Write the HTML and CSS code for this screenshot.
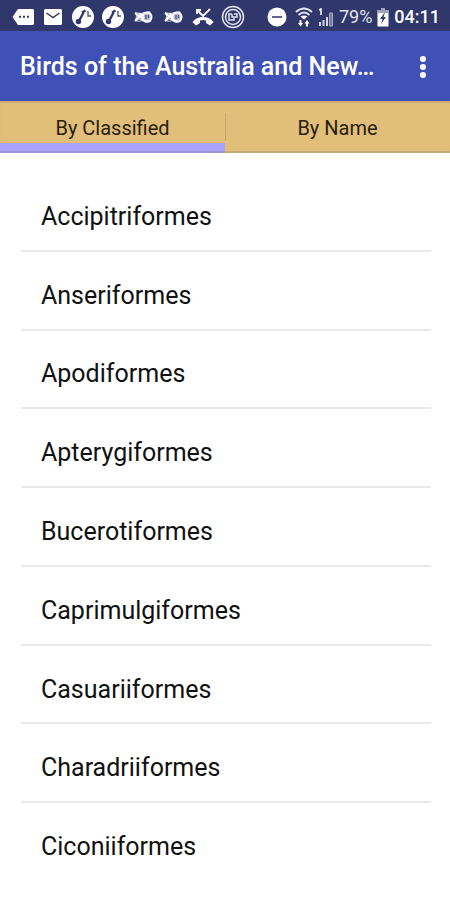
FILE: index.html
```html
<!DOCTYPE html>
<html lang="en">
<head>
<meta charset="utf-8">
<meta name="viewport" content="width=device-width, initial-scale=1">
<title>Birds of the Australia and New…</title>
<link rel="stylesheet" href="styles.css">
</head>
<body>
<svg class="defs" aria-hidden="true">
  <symbol id="pen" viewBox="0 0 24 24">
    <circle cx="12" cy="12" r="11" fill="#fff"/>
    <path d="M8 16l4.500-8.500" fill="none" stroke="#30386b" stroke-width="2.400"/>
    <path d="M11 7.500l3.500-2" stroke="#30386b" stroke-width="2.400"/>
    <circle cx="7.500" cy="16.500" r="2.700" fill="#30386b"/>
    <path d="M17 6v5h3" fill="none" stroke="#4a517d" stroke-width="1.300"/>
  </symbol>
  <symbol id="cast" viewBox="0 0 24 24">
    <path d="M4 7l6 1 3-1 6-1 2 5-1 6-5 1-4-2-3 1-4-1 1-5z" fill="#b4b8d0"/>
    <path d="M4 8l5 4M4 16l5-5M9 8l3 8" fill="none" stroke="#fff" stroke-width="2"/>
    <circle cx="16" cy="12" r="4.500" fill="none" stroke="#fff" stroke-width="2"/>
    <path d="M15 10v4M17.500 10v3M7 15l2 1" stroke="#4a517d" stroke-width="1.200"/>
  </symbol>
</svg>
<div class="status">
  <div class="notices">
    <svg viewBox="0 0 24 24"><path d="M1.500 12L7 4h14.500q1.500 0 1.500 1.500v13q0 1.500-1.500 1.500H7z" fill="#fff"/><path d="M8 10.800h2v2H8zM12 10.800h2v2h-2zM16 10.800h2v2h-2z" fill="#30386b"/></svg>
    <svg viewBox="0 0 24 24"><rect x="3" y="4" width="18" height="16" rx="1.500" fill="#fff"/><path d="M5.500 8l6.500 4.500L18.500 8" fill="none" stroke="#30386b" stroke-width="1.500"/></svg>
    <svg><use href="#pen"/></svg>
    <svg><use href="#pen"/></svg>
    <svg><use href="#cast"/></svg>
    <svg><use href="#cast"/></svg>
    <svg viewBox="0 0 24 24"><path d="M6 5l6 6 7-7M6 9V5h4" fill="none" stroke="#fff" stroke-width="1.800"/><path d="M1.500 17q4-5 10.500-5t10.500 5L19 20.500 15 18v-2.500q-3-1-6 0V18l-4 2.500z" fill="#fff"/></svg>
    <svg viewBox="0 0 24 24" fill="none" stroke="#e2e4f2" stroke-width="1.500"><circle cx="12" cy="12" r="10.500"/><circle cx="12" cy="12" r="7.500"/><path d="M11 9H8v6h5v-2M11 9v3h5V9h-3"/></svg>
  </div>
  <div class="system">
    <svg class="dnd" viewBox="0 0 20 20"><circle cx="10" cy="10" r="9.500" fill="#fff"/><path d="M5 10h10" stroke="#5d648f" stroke-width="2"/></svg>
    <svg class="wifi" viewBox="0 0 18 20"><path d="M1 5q8-7 16 0M3.500 8q5.500-5 11 0" fill="none" stroke="#e2e4f2" stroke-width="1.800"/><path d="M5.500 9.500q3.500-2 7 0L9 12.500z" fill="#fff"/><path d="M3 16h1.500v-3h2v3H8l-2.500 3.500zM9.500 16.500L12 13l2.500 3.500H13v3h-2v-3z" fill="#fff"/></svg>
    <svg class="signal" viewBox="0 0 16 20"><path d="M1 3l2-1v6" fill="none" stroke="#fff" stroke-width="1.500"/><path d="M2 19v-4M5.500 19v-6M9 19v-9" stroke="#d3d6e6" stroke-width="2"/><path d="M11.500 19V6h3v13z" fill="#747a9e" stroke="#a6aac4"/></svg>
    <span class="percent">79%</span>
    <svg class="battery" viewBox="0 0 12 20"><path d="M4 1h4v2h3.500v16.500H.5V3H4z" fill="#fff"/><path d="M4 1h4v2h3.500v3H.5V3H4z" fill="#9da2bf"/><path d="M8 5l-5 7h2.500L4 17l5-7H6.500z" fill="#30386b"/></svg>
    <time class="clock">04:11</time>
  </div>
</div>
<header class="appbar">
  <h1 class="title">Birds of the Australia and New…</h1>
  <button class="more" type="button" aria-label="More options"><svg viewBox="0 0 8 24" fill="#fff"><circle cx="4" cy="4" r="3"/><circle cx="4" cy="12" r="3"/><circle cx="4" cy="20" r="3"/></svg></button>
</header>
<nav class="tabs" role="tablist">
  <button class="tab tab-active" type="button" role="tab" aria-selected="true">By Classified</button>
  <button class="tab" type="button" role="tab" aria-selected="false">By Name</button>
</nav>
<ul class="list">
  <li class="row"><a href="#accipitriformes">Accipitriformes</a></li>
  <li class="row"><a href="#anseriformes">Anseriformes</a></li>
  <li class="row"><a href="#apodiformes">Apodiformes</a></li>
  <li class="row"><a href="#apterygiformes">Apterygiformes</a></li>
  <li class="row"><a href="#bucerotiformes">Bucerotiformes</a></li>
  <li class="row"><a href="#caprimulgiformes">Caprimulgiformes</a></li>
  <li class="row"><a href="#casuariiformes">Casuariiformes</a></li>
  <li class="row"><a href="#charadriiformes">Charadriiformes</a></li>
  <li class="row"><a href="#ciconiiformes">Ciconiiformes</a></li>
</ul>
</body>
</html>
```
FILE: styles.css
```css
* { box-sizing: border-box; }

body {
  margin: 0;
  min-height: 100vh;
  display: flex;
  flex-direction: column;
  background: #fff;
  color: #111;
  font-family: Roboto, "Liberation Sans", sans-serif;
}

.defs { position: absolute; width: 0; height: 0; }

.status {
  height: 31px;
  padding: 2px 10px 0 11px;
  display: flex;
  align-items: center;
  justify-content: space-between;
  background: #30386b;
  color: #fff;
}

.notices { display: flex; gap: 6px; }
.notices svg { width: 24px; height: 24px; }

.system { display: flex; align-items: center; gap: 5px; font-size: 18px; line-height: 20px; }
.system svg { height: 20px; }
.dnd { width: 20px; margin-right: 3px; }
.wifi { width: 18px; }
.signal { width: 16px; }
.battery { width: 12px; }
.percent { color: #e2e4f2; }
.clock { font-weight: 500; }

.appbar {
  height: 70px;
  padding: 2px 16px 0 20px;
  display: flex;
  align-items: center;
  gap: 24px;
  background: #3f51b5;
  color: #fff;
}

.title {
  flex: 1;
  min-width: 0;
  margin: 0;
  overflow: hidden;
  white-space: nowrap;
  text-overflow: ellipsis;
  font-size: 25px;
  font-weight: 500;
  line-height: 32px;
}

.more { width: 22px; height: 32px; padding: 0; border: 0; background: none; }
.more svg { display: block; width: 8px; height: 24px; margin: 0 auto; }

.tabs {
  height: 52px;
  display: flex;
  background: #e1bf7a;
  box-shadow: inset 0 2px 1px #c7ab74, inset 0 -2px 0 #c9ab70;
}

.tab {
  position: relative;
  flex: 1;
  padding: 2px 0 0;
  border: 0;
  background: none;
  color: #2a200c;
  font: 400 20px/24px Roboto, "Liberation Sans", sans-serif;
}

.tab-active { box-shadow: inset 0 -2px 0 #9994d9, inset 0 -10px 0 #a8a4fb; }

.tab-active::after {
  content: "";
  position: absolute;
  top: 12px;
  right: -1px;
  width: 1px;
  height: 28px;
  background: #c9aa6c;
}

.list {
  flex: 1;
  margin: 0;
  padding: 20px 19px 18px 21px;
  display: flex;
  flex-direction: column;
  list-style: none;
}

.row { flex: 1; display: flex; border-bottom: 2px solid #e8e8e8; }
.row:last-child { border-bottom-color: transparent; }

.row a {
  flex: 1;
  display: flex;
  align-items: center;
  padding: 11px 20px 0;
  color: inherit;
  font-size: 25px;
  line-height: 32px;
  text-decoration: none;
}
```
